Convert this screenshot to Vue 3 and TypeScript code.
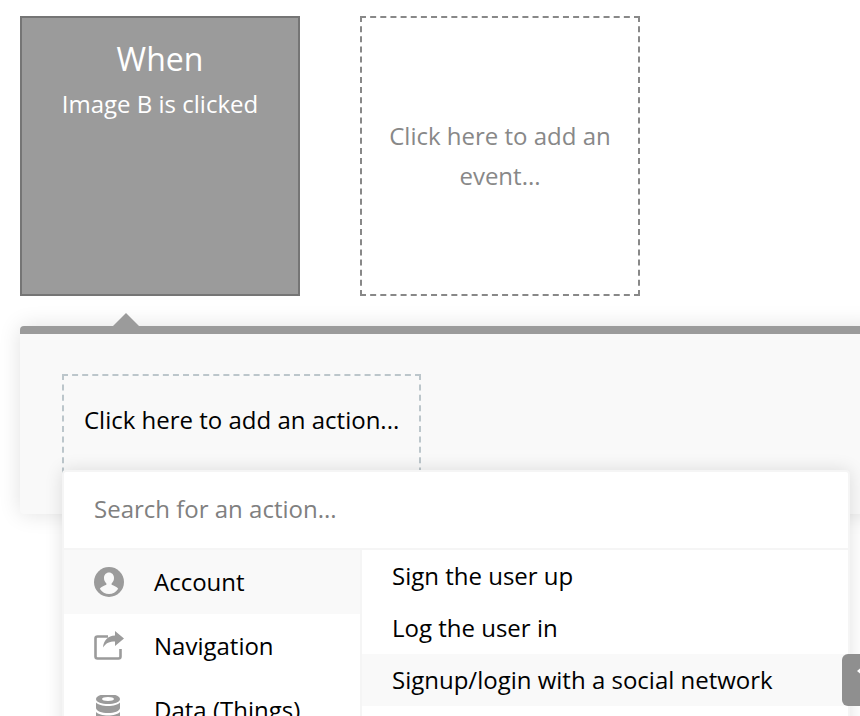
<script setup lang="ts">
interface Category {
  name: string;
  icon: 'account' | 'navigation' | 'data';
  active?: boolean;
}

const categories: Category[] = [
  { name: 'Account', icon: 'account', active: true },
  { name: 'Navigation', icon: 'navigation' },
  { name: 'Data (Things)', icon: 'data' }
];

const actions = [
  { label: 'Sign the user up', active: false },
  { label: 'Log the user in', active: false },
  { label: 'Signup/login with a social network', active: true }
];
</script>

<template>
  <div class="page">
    <div class="events">
      <div class="event-card">
        <div class="event-title">When</div>
        <div class="event-name">Image B is clicked</div>
      </div>
      <div class="event-empty">Click here to add an event...</div>
    </div>

    <div class="panel">
      <span class="panel-arrow"></span>
      <div class="add-action">Click here to add an action...</div>

      <div class="action-menu">
        <div class="menu-search">Search for an action...</div>
        <div class="menu-body">
          <ul class="menu-categories">
            <li
              v-for="cat in categories"
              :key="cat.name"
              class="category"
              :class="{ active: cat.active }"
            >
              <svg class="category-icon" viewBox="0 0 30 30" width="30" height="30">
                <template v-if="cat.icon === 'account'">
                  <circle cx="15" cy="15" r="15" fill="#9b9b9b" />
                  <path
                    d="M15 5.500c-3 0-5 2.400-5 5.500 0 2.300.9 4.200 2.400 5.400v1.400c-2.400 1-5.600 2.200-6.600 3.900C8 25.200 11.300 27 15 27s7-1.800 9.200-5.300c-1-1.700-4.200-2.900-6.600-3.900v-1.400c1.500-1.200 2.400-3.100 2.400-5.400 0-3.100-2-5.500-5-5.500z"
                    fill="#f9f9f9"
                  />
                </template>
                <template v-else-if="cat.icon === 'navigation'">
                  <path
                    d="M14 5.500H3.500A2 2 0 0 0 1.500 7.500v18a2 2 0 0 0 2 2h21a2 2 0 0 0 2-2V18"
                    fill="none"
                    stroke="#9b9b9b"
                    stroke-width="2.600"
                  />
                  <path d="M21 0l9 7.500-9 7.500v-4.500c-5.500 0-9 1.500-12 6 .5-7 5-12 12-12z" fill="#9b9b9b" />
                </template>
                <g v-else transform="translate(-1 -1)">
                  <path
                    d="M15 0C9 0 3 1.800 3 5s6 5 12 5 12-1.800 12-5-6-5-12-5zm0 3c3.500 0 6 .9 6 2s-2.500 2-6 2-6-.9-6-2 2.500-2 6-2z"
                    fill="#9b9b9b"
                    fill-rule="evenodd"
                  />
                  <path d="M3 8.500v5.500c0 3 6 5 12 5s12-2 12-5V8.500c-2 2.200-6.500 3.500-12 3.500S5 10.700 3 8.500z" fill="#9b9b9b" />
                  <path d="M3 18v6c0 3 6 5 12 5s12-2 12-5v-6c-2 2.200-6.500 3.500-12 3.500S5 20.200 3 18z" fill="#9b9b9b" />
                </g>
              </svg>
              <span class="category-name">{{ cat.name }}</span>
            </li>
          </ul>
          <ul class="menu-actions">
            <li
              v-for="item in actions"
              :key="item.label"
              class="action"
              :class="{ active: item.active }"
            >
              {{ item.label }}
            </li>
          </ul>
        </div>
      </div>
    </div>

    <div class="side-handle"><span class="handle-mark"></span></div>
  </div>
</template>

<style>
html,
body {
  margin: 0;
  background: #fff;
  overflow: hidden;
}
</style>

<style scoped>
.page {
  position: relative;
  width: 860px;
  height: 716px;
  overflow: hidden;
  box-sizing: border-box;
  padding: 16px 0 0 20px;
  background: #fff;
  font-family: "Open Sans", "Noto Sans", sans-serif;
}

ul {
  list-style: none;
  margin: 0;
  padding: 0;
}

.events {
  display: flex;
  gap: 60px;
}

.event-card,
.event-empty {
  width: 280px;
  height: 280px;
  box-sizing: border-box;
}

.event-card {
  background: #9b9b9b;
  border: 2px solid #757575;
  color: #fff;
  text-align: center;
  padding-top: 21px;
}

.event-title {
  font-size: 32px;
  line-height: 40px;
}

.event-name {
  font-size: 24px;
  line-height: 32px;
  margin-top: 9px;
}

.event-empty {
  display: flex;
  align-items: center;
  justify-content: center;
  border: 2px dashed #888;
  padding: 0 20px;
  color: #888;
  font-size: 24px;
  line-height: 40px;
  text-align: center;
}

.panel {
  position: relative;
  width: 860px;
  height: 188px;
  margin-top: 30px;
  box-sizing: border-box;
  border-top: 8px solid #9b9b9b;
  border-radius: 4px;
  background: #f9f9f9;
  box-shadow: 0 0 22px rgba(0, 0, 0, 0.12);
  padding: 40px 0 0 42px;
}

.panel-arrow {
  position: absolute;
  left: 93px;
  top: -21px;
  width: 0;
  height: 0;
  border-left: 13px solid transparent;
  border-right: 13px solid transparent;
  border-bottom: 13px solid #9b9b9b;
}

.add-action {
  width: 359px;
  height: 110px;
  box-sizing: border-box;
  border: 2px dashed #bcc6cb;
  padding-left: 20px;
  padding-top: 24px;
  color: #000;
  font-size: 24px;
  line-height: 40px;
}

.action-menu {
  position: absolute;
  left: 42px;
  top: 136px;
  width: 788px;
  box-sizing: border-box;
  background: #fff;
  border: 2px solid #f5f5f5;
  border-radius: 4px;
  box-shadow: 0 0 18px rgba(0, 0, 0, 0.12);
}

.menu-search {
  height: 78px;
  box-sizing: border-box;
  padding: 17px 0 0 30px;
  border-bottom: 2px solid #f5f5f5;
  color: #808080;
  font-size: 24px;
  line-height: 40px;
}

.menu-body {
  display: flex;
}

.menu-categories {
  width: 298px;
  box-sizing: border-box;
  flex: none;
  border-right: 2px solid #f5f5f5;
}

.category {
  display: flex;
  align-items: center;
  gap: 30px;
  height: 64px;
  padding-left: 30px;
  color: #000;
  font-size: 24px;
}

.category.active {
  background: #f9f9f9;
}

.category-icon {
  flex: none;
}

.category-name {
  padding-bottom: 2px;
}

.menu-actions {
  flex: 1;
}

.action {
  height: 52px;
  line-height: 52px;
  padding-left: 30px;
  color: #000;
  font-size: 24px;
}

.action.active {
  background: #f9f9f9;
}

.side-handle {
  position: absolute;
  left: 842px;
  top: 654px;
  width: 40px;
  height: 52px;
  border-radius: 6px;
  background: #8f8f8f;
}

.handle-mark {
  position: absolute;
  left: 15px;
  top: 12px;
  width: 0;
  height: 0;
  border-top: 5px solid transparent;
  border-bottom: 5px solid transparent;
  border-right: 6px solid #fff;
}
</style>
